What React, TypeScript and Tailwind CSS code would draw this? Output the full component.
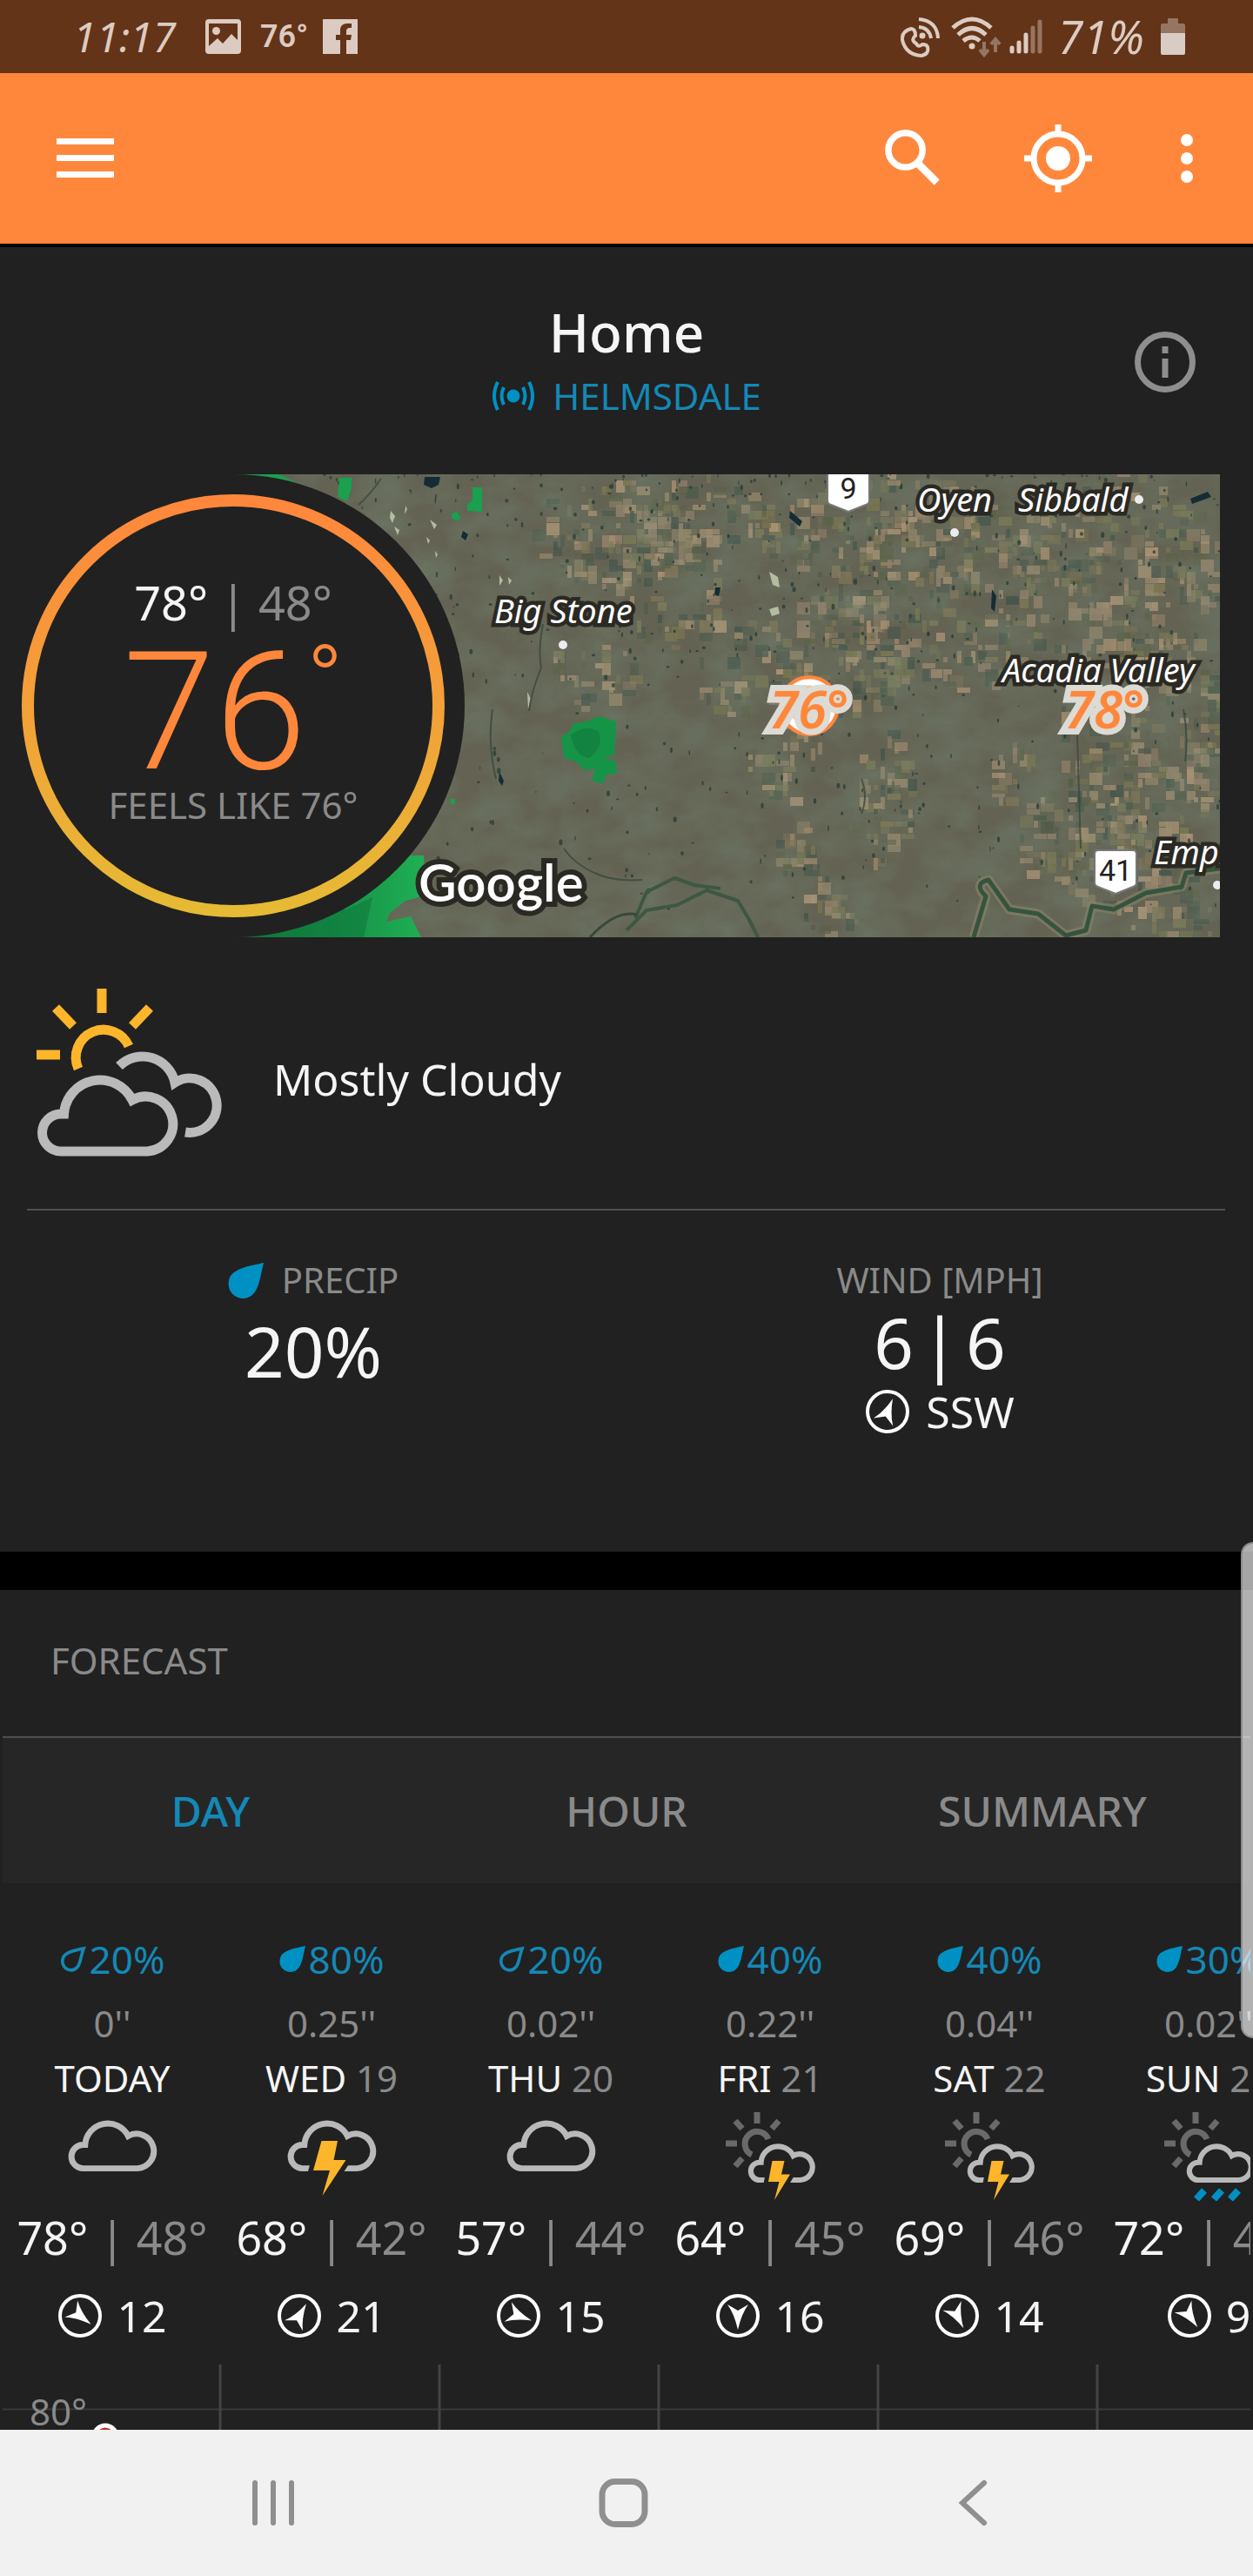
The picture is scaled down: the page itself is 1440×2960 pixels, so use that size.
import React, { useState } from 'react';

const days = [
  { day: 'TODAY', date: '', chance: 20, amount: "0''", icon: 'cloud', high: 78, low: 48, wind: 12, heading: 128 },
  { day: 'WED', date: '19', chance: 80, amount: "0.25''", icon: 'storm', high: 68, low: 42, wind: 21, heading: 30 },
  { day: 'THU', date: '20', chance: 20, amount: "0.02''", icon: 'cloud', high: 57, low: 44, wind: 15, heading: 110 },
  { day: 'FRI', date: '21', chance: 40, amount: "0.22''", icon: 'sun-storm', high: 64, low: 45, wind: 16, heading: 180 },
  { day: 'SAT', date: '22', chance: 40, amount: "0.04''", icon: 'sun-storm', high: 69, low: 46, wind: 14, heading: 153 },
  { day: 'SUN', date: '23', chance: 30, amount: "0.02''", icon: 'sun-rain', high: 72, low: 48, wind: 9, heading: 145 },
];

const tabs = ['DAY', 'HOUR', 'SUMMARY'];

const CLOUD = 'M30 193 A21.5 21.5 0 0 1 30 150 H33.5 A41.5 41.5 0 0 1 112 134 A31.5 31.5 0 1 1 129 193 Z';

function Drop({ filled = true, className }: { filled?: boolean; className: string }) {
  return (
    <svg viewBox="0 0 41 41" className={className} aria-hidden="true">
      {filled ? (
        <path d="M41 0 C28 3 7 6 2 17 C-3 30 6 41 18 41 C30 40 34 30 37 18 Q39 8 41 0Z" fill="#0091c4" />
      ) : (
        <path
          d="M37 4 C26 6 9 9 5 18 C1 29 8 38 18 38 C28 37 31 28 33 18 Q35 10 37 4Z"
          fill="none"
          stroke="#1487b4"
          strokeWidth="5"
        />
      )}
    </svg>
  );
}

function WindDirection({ heading }: { heading: number }) {
  return (
    <svg viewBox="-26 -26 52 52" className="size-[52px] shrink-0" aria-hidden="true">
      <circle r="23" fill="none" stroke="#fff" strokeWidth="4" />
      <path d="M0 -16 Q4 2 12 13 L0 6 L-12 13 Q-4 2 0 -16Z" fill="#fff" transform={`rotate(${heading})`} />
    </svg>
  );
}

function SmallSun() {
  return (
    <g fill="none" stroke="#6a6a6a" strokeWidth="7">
      <path d="M50 31 A14 14 0 1 0 31 49" />
      <path d="M37 0 V13 M1 36 H14 M12 10 L20 19 M62 10 L54 19 M12 62 L20 53" />
    </g>
  );
}

function DayIcon({ name }: { name: string }) {
  const small = name.startsWith('sun');
  const storm = name.endsWith('storm');
  return (
    <svg viewBox="0 0 104 102" className="h-[102px] w-[104px]" role="img" aria-label={name}>
      {small && <SmallSun />}
      <path
        d={CLOUD}
        fill="none"
        stroke="#b9b9b9"
        strokeWidth={small ? 13 : 11}
        transform={small ? 'translate(25.8 -13.1) scale(.472)' : 'translate(-.3 -57) scale(.63)'}
      />
      {storm && !small && (
        <path
          d="M40.5 33 H59 L54.5 55 H68.5 L41.5 96 L50 67 H31Z"
          fill="#fdb62b"
          stroke="#212121"
          strokeWidth="11"
          paintOrder="stroke"
        />
      )}
      {storm && small && (
        <path
          d="M54.5 56 H68.5 L65 71.5 H75 L57 101 L62.5 80 H50Z"
          fill="#fdb62b"
          stroke="#212121"
          strokeWidth="10"
          paintOrder="stroke"
        />
      )}
      {name === 'sun-rain' && (
        <path d="M38 100 L47 90 M58 100 L67 90 M77 100 L86 90" stroke="#0091c4" strokeWidth="8" />
      )}
    </svg>
  );
}

function MostlyCloudyIcon() {
  return (
    <svg viewBox="0 0 216 220" className="h-[220px] w-[216px] shrink-0" fill="none" strokeWidth="11" aria-hidden="true">
      <g stroke="#fdb62b">
        <path d="M50 98 A31.5 31.5 0 1 1 108 72" />
        <path d="M77 6 V34 M2 82 H29 M24 28 L44 49 M132 28 L112 49" />
      </g>
      <g stroke="#bababa">
        <path d="M97 95 A38 38 0 0 1 161 114 A31.2 31.2 0 1 1 173 171" />
        <path d={CLOUD} />
      </g>
    </svg>
  );
}

// Small seeded generator, so that the farmland looks the same on every render.
function makeRandom(seed: number) {
  let s = seed;
  return () => {
    s = (s * 1664525 + 1013904223) % 4294967296;
    return s / 4294967296;
  };
}

// [centre x, centre y, radius x, radius y, number of fields]
const farmland = [
  [430, 65, 90, 65, 110],
  [410, 225, 50, 40, 30],
  [500, 120, 60, 80, 70],
  [580, 210, 60, 70, 40],
  [700, 200, 80, 70, 100],
  [750, 60, 150, 60, 170],
  [800, 150, 130, 110, 150],
  [1010, 110, 125, 115, 240],
  [745, 370, 35, 75, 60],
  [635, 325, 45, 45, 36],
  [645, 424, 26, 30, 24],
  [677, 495, 28, 32, 24],
  [1040, 300, 95, 130, 220],
  [940, 420, 45, 60, 46],
  [1030, 440, 100, 60, 80],
  [890, 340, 26, 36, 20],
  [1080, 510, 55, 25, 28],
  [540, 50, 80, 50, 60],
];

const fieldColors = ['#94806a', '#a38c6e', '#7c7256', '#77734f', '#93856a', '#4f5a49', '#46544a', '#7a7856', '#ab9375', '#5c6048'];

function Terrain() {
  const rnd = makeRandom(19);
  const fields = farmland.flatMap(([cx, cy, rx, ry, count]) =>
    Array.from({ length: count }, () => {
      const a = rnd() * Math.PI * 2;
      const r = Math.sqrt(rnd());
      return {
        x: Math.round((cx + Math.cos(a) * r * rx) / 8) * 8,
        y: Math.round((cy + Math.sin(a) * r * ry) / 7) * 7,
        w: 5 + Math.floor(rnd() * 3) * 5,
        h: 6 + Math.floor(rnd() * 3) * 4,
        fill: fieldColors[Math.floor(rnd() * fieldColors.length)],
        opacity: 0.5 + rnd() * 0.45,
      };
    }),
  );
  const ponds = Array.from({ length: 620 }, () => ({
    x: rnd() * 1134,
    y: Math.pow(rnd(), 1.5) * 500,
    rx: 0.6 + rnd() * 1.5,
    ry: 0.8 + rnd() * 2.6,
  }));

  return (
    <svg viewBox="0 0 1134 532" preserveAspectRatio="xMinYMin slice" className="absolute inset-0 h-full w-full" aria-hidden="true">
      <defs>
        <filter id="soil" x="0" y="0" width="100%" height="100%">
          <feTurbulence type="fractalNoise" baseFrequency=".02 .03" numOctaves="6" seed="4" />
          <feColorMatrix values="0 0 0 0 .18  0 0 0 0 .27  0 0 0 0 .2  1.6 0 0 0 -.5" />
        </filter>
        <linearGradient id="woods" x1="0" x2="1">
          <stop offset="0" stopColor="#0d6a38" />
          <stop offset="1" stopColor="#1fb054" />
        </linearGradient>
      </defs>
      <rect width="1134" height="532" fill="#646353" />
      {fields.map((f, i) => (
        <rect key={i} x={f.x} y={f.y} width={f.w} height={f.h} fill={f.fill} opacity={f.opacity} />
      ))}
      <rect width="1134" height="532" filter="url(#soil)" opacity=".4" />
      {ponds.map((p, i) => (
        <ellipse key={i} cx={p.x} cy={p.y} rx={p.rx} ry={p.ry} fill="#253a36" opacity=".75" />
      ))}

      {/* Lakes and salt flats */}
      <path d="M220 3 H238 L236 12 L228 16 L219 12Z M264 65 l6 4 -3 7 -5 -4Z M306 342 l5 10 -2 6 -4 -6Z M554 130 h6 l-2 10 -5 -2Z M640 42 l14 12 -3 6 -12 -10Z M872 132 l5 8 -2 18 -4 -4Z M1100 28 l20 -8 4 6 -22 8Z" fill="#152c36" />
      <path d="M181 42 l5 6 -3 8 -3 -6Z M198 36 l2 4 -3 6Z M185 60 l6 4 -2 6Z M226 52 l8 6 -3 5Z M222 72 l4 4 -2 4Z M232 88 l3 4 -2 4Z M306 116 l4 6 -4 6Z M316 118 l4 4 -3 5Z M338 250 l4 8 -3 12Z M616 112 l10 6 2 12 -8 -3Z M616 155 l10 -3 2 8 -9 3Z" fill="#b4bda3" />
      <path d="M170 5 q-14 20 -26 30 M356 172 q-6 30 -2 50 q-12 30 -14 50 M298 270 q-6 40 4 80 M970 300 l4 130 M1092 270 q6 30 2 60 M722 350 q8 20 0 40 M380 430 q14 20 40 30 q20 8 50 6" fill="none" stroke="#39483d" strokeWidth="2" opacity=".8" />

      {/* Rivers */}
      <g fill="none" strokeLinejoin="round">
        <path d="M851 532 L865 485 Q850 470 868 466 L892 500 L925 505 L957 530 L980 524 L987 496 L1012 500 L1049 481 L1090 474 L1095 458 L1134 453" stroke="#8a8468" strokeWidth="11" opacity=".6" />
        <path d="M851 532 L865 485 Q850 470 868 466 L892 500 L925 505 L957 530 L980 524 L987 496 L1012 500 L1049 481 L1090 474 L1095 458 L1134 453" stroke="#35543f" strokeWidth="5" />
        <path d="M452 524 L475 501 L510 495 L544 478 L580 490 L592 510 L603 532 M462 510 L475 480 L507 464 L530 472 L560 476" stroke="#3d5743" strokeWidth="4" />
        <path d="M410 532 Q440 500 464 506" stroke="#39483d" strokeWidth="3" />
      </g>

      {/* Parks */}
      <path d="M0 0 H52 L72 9 H40Z M122 4 H136 V16 L131 31 L120 26Z M275 15 H286 V43 L269 42 V34 L275 30Z M251 45 L257 43 L262 50 L257 54 L251 50Z M250 373 h5 v6 h-5Z" fill="#1aa04e" />
      <path d="M377 302 L388 294 L390 287 L406 284 L421 278 L440 284 L438 322 L426 326 L440 330 L441 343 L428 346 L425 356 L412 352 L416 338 L404 340 L394 330 L380 326Z" fill="#159448" />
      <path d="M388 300 Q405 286 420 296 Q426 312 410 326 Q394 326 388 300Z" fill="#0f6f37" opacity=".45" />
      <path d="M0 532 L140 480 L204 438 L219 438 L220 460 L214 486 L198 490 L180 504 L176 514 L204 508 L216 532Z" fill="url(#woods)" />
      <path d="M60 532 Q90 498 130 500 L160 486 L150 532Z" fill="#0f7a3d" opacity=".6" />
    </svg>
  );
}

function Place({ className, children }: { className: string; children: React.ReactNode }) {
  return (
    <span
      className={`absolute text-[38px] leading-[44px] whitespace-nowrap text-white italic [paint-order:stroke_fill] [-webkit-text-stroke:9px_#2b2923] ${className}`}
    >
      {children}
    </span>
  );
}

function Station({ className, children }: { className: string; children: React.ReactNode }) {
  return (
    <span
      className={`absolute text-[60px] leading-[68px] font-semibold whitespace-nowrap text-[#ff873c] italic [paint-order:stroke_fill] [-webkit-text-stroke:14px_#dcdbd5] ${className}`}
    >
      {children}
    </span>
  );
}

function Shield({ className, children }: { className: string; children: React.ReactNode }) {
  return (
    <div className={`absolute h-[52px] w-[50px] ${className}`}>
      <svg viewBox="0 0 50 52" className="absolute inset-0" aria-hidden="true">
        <path d="M5 1 H45 Q49 1 49 5 V38 Q49 42 45 43 L25 51 L5 43 Q1 42 1 38 V5 Q1 1 5 1Z" fill="#fff" stroke="#77777a" strokeWidth="2" />
      </svg>
      <span className="relative block text-center font-[Roboto] text-[34px] leading-[48px] text-[#222]">{children}</span>
    </div>
  );
}

function TownDot({ className }: { className: string }) {
  return <span className={`absolute size-[10px] rounded-full bg-[#ececf0] ${className}`} />;
}

function RadarMap() {
  return (
    <div className="absolute inset-y-0 right-[38px] left-[268px] overflow-hidden bg-[#646153]">
      <Terrain />
      <Shield className="-top-[8px] left-[682px]">9</Shield>
      <Place className="top-[6px] left-[786px]">Oyen</Place>
      <TownDot className="top-[62px] left-[824px]" />
      <Place className="top-[6px] left-[902px]">Sibbald</Place>
      <TownDot className="top-[24px] left-[1036px]" />
      <Place className="top-[134px] left-[300px]">Big Stone</Place>
      <TownDot className="top-[191px] left-[374px]" />
      <Place className="top-[202px] left-[884px]">Acadia Valley</Place>
      <svg viewBox="0 0 70 70" className="absolute top-[231px] left-[627px] size-[70px]" aria-hidden="true">
        <circle cx="35" cy="35" r="33" fill="#f3c3a0" stroke="#ff873c" strokeWidth="4" />
        <circle cx="35" cy="35" r="27" fill="none" stroke="#fff" strokeWidth="7" />
      </svg>
      <Station className="top-[235px] left-[616px]">76°</Station>
      <Station className="top-[235px] left-[956px]">78°</Station>
      <Shield className="top-[431px] left-[989px]">41</Shield>
      <Place className="top-[411px] left-[1058px]">Empress</Place>
      <TownDot className="top-[467px] left-[1126px]" />
    </div>
  );
}

function StatusBar() {
  return (
    <div className="flex h-[84px] items-center justify-between bg-[#633418] pr-[78px] pl-[84px] text-[#dccbc1]">
      <div className="flex items-center">
        <span className="w-[152px] text-[48px] leading-[56px] italic">11:17</span>
        <svg viewBox="0 0 41 40" className="h-[40px] w-[41px]" aria-hidden="true">
          <path fillRule="evenodd" fill="currentColor" d="M4 0 H37 Q41 0 41 4 V36 Q41 40 37 40 H4 Q0 40 0 36 V4 Q0 0 4 0Z M4 5 V31 L14 22 L20 28 L30 17 L37 24 V5Z" />
          <circle cx="12.500" cy="13.500" r="4.500" fill="currentColor" />
        </svg>
        <span className="ml-[22px] font-[Roboto] text-[36px] leading-[40px] font-semibold">76°</span>
        <svg viewBox="0 0 40 40" className="ml-[17px] size-[40px]" aria-hidden="true">
          <path fill="currentColor" d="M0 0 H40 V40 H27 V24 H32 L33 18 H27 V14 Q27 10 31 10 H33 V5 H28 Q20 5 20 13 V18 H15 V24 H20 V40 H0Z" />
        </svg>
      </div>
      <div className="flex items-center">
        <svg viewBox="0 0 116 48" className="h-[48px] w-[116px]" fill="none" stroke="currentColor" strokeWidth="4" aria-hidden="true">
          <path d="M12 15 Q1 18 2 28 Q6 45 24 46 Q33 44 31 36 Q30 33 25 33 Q20 37 18 32 Q11 28 17 23 Q17 15 12 15Z" />
          <path d="M21 13 Q33 14 35 26 M21 4 Q42 6 43 26" />
          <circle cx="25" cy="23" r="3.500" fill="currentColor" stroke="none" />
          <g strokeWidth="5">
            <path d="M60 14 Q82 -6 104 14 M66 22 Q82 7 98 22 M72 29 Q82 21 91 29" />
          </g>
          <circle cx="82" cy="35" r="3.500" fill="currentColor" stroke="none" />
          <path d="M96 30 V44 M91 39 L96 45 L101 39 M109 42 V28 M104 33 L109 27 L114 33" stroke="#977563" />
        </svg>
        <svg viewBox="0 0 38 42" className="ml-[9px] h-[42px] w-[38px]" strokeWidth="5" strokeLinecap="round" aria-hidden="true">
          <path d="M3 34 V38 M11 28 V38 M19 19 V38" stroke="currentColor" />
          <path d="M27 11 V38 M35 4 V38" stroke="#977563" />
        </svg>
        <span className="ml-[18px] w-[118px] text-[52px] leading-[56px] italic">71%</span>
        <svg viewBox="0 0 28 42" className="h-[42px] w-[28px]" aria-hidden="true">
          <path d="M8 0 H20 V6 H26 Q28 6 28 8 V17 H0 V8 Q0 6 2 6 H8Z" fill="#977563" />
          <path d="M0 17 H28 V40 Q28 42 26 42 H2 Q0 42 0 40Z" fill="#d8ccc5" />
        </svg>
      </div>
    </div>
  );
}

function AppBar() {
  return (
    <header className="flex h-[200px] items-center justify-between border-b-4 border-black bg-[#ff873c] pr-[66px] pl-[65px]">
      <button type="button" aria-label="Menu">
        <svg viewBox="0 0 66 46" className="h-[46px] w-[66px]" fill="#fff">
          <path d="M0 0 H66 V7 H0Z M0 19 H66 V26 H0Z M0 38 H66 V45 H0Z" />
        </svg>
      </button>
      <div className="flex items-center">
        <button type="button" aria-label="Search">
          <svg viewBox="0 0 64 64" className="size-[68px]" fill="none" stroke="#fff">
            <circle cx="25" cy="23" r="18.500" strokeWidth="7" />
            <path d="M39 38 L59 58" strokeWidth="8" />
          </svg>
        </button>
        <button type="button" aria-label="My location" className="ml-[94px]">
          <svg viewBox="-40 -40 80 80" className="size-[80px]" fill="none" stroke="#fff" strokeWidth="7">
            <circle r="28" />
            <circle r="14" fill="#fff" stroke="none" />
            <path d="M0 -39 V-29 M0 39 V29 M-39 0 H-29 M39 0 H29" />
          </svg>
        </button>
        <button type="button" aria-label="More options" className="ml-[98px]">
          <svg viewBox="0 0 20 60" className="h-[60px] w-[20px]" fill="#fff">
            <circle cx="10" cy="9" r="7" />
            <circle cx="10" cy="30" r="7" />
            <circle cx="10" cy="51" r="7" />
          </svg>
        </button>
      </div>
    </header>
  );
}

function LocationHeader() {
  return (
    <div className="grid grid-cols-[1fr_auto_1fr] items-start pt-[61px] pb-[66px]">
      <div className="col-start-2 text-center">
        <h1 className="text-[62px] leading-[72px] font-medium text-[#f5f5f5]">Home</h1>
        <a href="#station" className="mt-[14px] flex items-center gap-[20px] text-[42px] leading-[48px] text-[#1488b6]">
          <svg viewBox="0 0 50 34" className="h-[34px] w-[50px]" fill="none" stroke="#0091c4" strokeWidth="4" aria-hidden="true">
            <circle cx="25" cy="17" r="7.500" fill="#0091c4" stroke="none" />
            <path d="M14 7 Q9 17 14 27 M36 7 Q41 17 36 27 M7 1 Q-1 17 7 33 M43 1 Q51 17 43 33" />
          </svg>
          HELMSDALE
        </a>
      </div>
      <button type="button" aria-label="Station information" className="mt-[35px] mr-[65px] justify-self-end">
        <svg viewBox="0 0 72 72" className="size-[72px]" fill="none" stroke="#8e8e8e">
          <circle cx="36" cy="36" r="31.500" strokeWidth="7" />
          <path d="M36 18 V26 M36 32 V54" strokeWidth="7" />
        </svg>
      </button>
    </div>
  );
}

function CurrentTemperature() {
  return (
    <div className="relative ml-[2px] size-[532px] rounded-full bg-[#212121]">
      <svg viewBox="0 0 532 532" className="absolute inset-0" fill="none" aria-hidden="true">
        <defs>
          <linearGradient id="ring" x1="0" y1="0" x2="0" y2="1">
            <stop offset="0" stopColor="#ff873c" />
            <stop offset="1" stopColor="#e6ba35" />
          </linearGradient>
        </defs>
        <circle cx="266" cy="266" r="236" stroke="url(#ring)" strokeWidth="14" />
      </svg>
      <div className="relative flex flex-col items-center pt-[117px]">
        <p className="text-[54px] leading-[60px] text-[#8a8a8a]">
          <span className="text-[#f5f5f5]">78°</span> | 48°
        </p>
        <p className="mt-[16px] flex items-start font-[Roboto] font-light text-[#ff873c]">
          <span className="text-[190px] leading-[160px]">76</span>
          <span className="text-[112px] leading-[88px]">°</span>
        </p>
        <p className="mt-[3px] text-[42px] leading-[48px] text-[#8a8a8a]">FEELS LIKE 76°</p>
      </div>
    </div>
  );
}

function CurrentConditions() {
  return (
    <section aria-label="Current conditions">
      <div className="relative">
        <RadarMap />
        <CurrentTemperature />
        <span className="absolute top-[432px] left-[481px] font-[Lato] text-[60px] leading-[72px] font-semibold text-white [paint-order:stroke_fill] [-webkit-text-stroke:12px_#2b2923]">
          Google
        </span>
      </div>

      <div className="flex items-center gap-[58px] pt-[53px] pb-[39px] pl-[40px]">
        <MostlyCloudyIcon />
        <p className="text-[50px] leading-[60px] text-[#f5f5f5]">Mostly Cloudy</p>
      </div>
      <hr className="mr-[32px] ml-[31px] border-t-2 border-[#4f4f4f]" />

      <div className="grid grid-cols-2 pt-[56px] pb-[133px] text-[#f5f5f5]">
        <div className="flex flex-col items-center">
          <h2 className="flex items-center gap-[21px] text-[40px] leading-[48px] text-[#8a8a8a]">
            <Drop className="size-[41px]" />
            PRECIP
          </h2>
          <p className="mt-[17px] text-[80px] leading-[80px]">20%</p>
        </div>
        <div className="flex flex-col items-center">
          <h2 className="text-[40px] leading-[48px] text-[#8a8a8a]">WIND [MPH]</h2>
          <p className="mt-[7px] flex gap-2 text-[80px] leading-[80px]">
            <span>6</span>
            <span>|</span>
            <span>6</span>
          </p>
          <p className="mt-[12px] flex items-center gap-[18px] text-[50px] leading-[56px]">
            <WindDirection heading={22} />
            SSW
          </p>
        </div>
      </div>
    </section>
  );
}

function DayColumn({ item }: { item: (typeof days)[number] }) {
  return (
    <li className="flex w-[252px] shrink-0 flex-col items-center text-[42px] leading-[48px] whitespace-nowrap text-[#8a8a8a]">
      <p className="flex items-center gap-[4px] text-[44px] text-[#1488b6]">
        <Drop filled={item.chance >= 30} className="size-[30px]" />
        {item.chance}%
      </p>
      <p className="mt-[26px]">{item.amount}</p>
      <p className="mt-[15px]">
        <span className="text-[#f5f5f5]">{item.day}</span> {item.date}
      </p>
      <div className="mt-[15px]">
        <DayIcon name={item.icon} />
      </div>
      <p className="mt-[12px] text-[52px] leading-[60px]">
        <span className="text-[#f5f5f5]">{item.high}°</span> | {item.low}°
      </p>
      <p className="mt-[34px] flex items-center gap-[16px] text-[50px] leading-[52px] text-[#f5f5f5]">
        <WindDirection heading={item.heading} />
        {item.wind}
      </p>
    </li>
  );
}

function Forecast() {
  const [active, setActive] = useState('DAY');
  return (
    <section aria-label="Forecast" className="flex flex-1 flex-col">
      <h2 className="pt-[57px] pb-[63px] pl-[58px] text-[42px] leading-[48px] text-[#8a8a8a]">FORECAST</h2>
      <div className="mx-[3px] grid grid-cols-3 border-t-2 border-[#4f4f4f] bg-[#262626]" role="tablist">
        {tabs.map((tab) => (
          <button
            key={tab}
            type="button"
            role="tab"
            aria-selected={tab === active}
            onClick={() => setActive(tab)}
            className={`h-[167px] text-[48px] leading-[56px] font-medium ${tab === active ? 'text-[#1488b6]' : 'text-[#8a8a8a]'}`}
          >
            {tab}
          </button>
        ))}
      </div>

      <ul className="mx-[3px] flex overflow-hidden pt-[63px] pb-[30px]">
        {days.map((item) => (
          <DayColumn key={item.day} item={item} />
        ))}
      </ul>

      {/* Top of the temperature chart, cut off by the navigation bar */}
      <div className="mx-[3px] min-h-[75px] flex-1 overflow-hidden">
        <svg className="h-[75px] w-full" aria-label="Temperature chart">
          <path d="M0 51.500 H2000" stroke="#3a3a3a" strokeWidth="2" />
          {days.map((item, i) => (
            <path key={item.day} d={`M${(i + 1) * 252 - 2} 0 V75`} stroke="#444" strokeWidth="3" />
          ))}
          <text x="31" y="70" className="fill-[#8a8a8a] text-[42px]">80°</text>
          <circle cx="118" cy="83" r="13" fill="#c0302b" stroke="#fff" strokeWidth="5" />
        </svg>
      </div>
    </section>
  );
}

function NavigationBar() {
  return (
    <nav className="grid h-[168px] grid-cols-3 place-items-center bg-[#f1f1f1] pr-[121px] pl-[113px]">
      <button type="button" aria-label="Recent apps">
        <svg viewBox="0 0 60 60" className="size-[60px]" stroke="#8f8f8f" strokeWidth="6" strokeLinecap="round">
          <path d="M9 7 V53 M30 7 V53 M51 7 V53" />
        </svg>
      </button>
      <button type="button" aria-label="Home">
        <svg viewBox="0 0 60 60" className="size-[60px]" fill="none" stroke="#8f8f8f" strokeWidth="7">
          <rect x="6" y="5.500" width="49" height="49" rx="15" />
        </svg>
      </button>
      <button type="button" aria-label="Back">
        <svg viewBox="0 0 60 60" className="size-[60px]" fill="none" stroke="#8f8f8f" strokeWidth="6" strokeLinecap="round">
          <path d="M43 7 L18 30 L43 53" />
        </svg>
      </button>
    </nav>
  );
}

export default function App() {
  return (
    <div className="relative flex min-h-screen flex-col overflow-hidden bg-[#212121] font-['Noto_Sans',sans-serif]">
      <StatusBar />
      <AppBar />
      <main className="flex flex-1 flex-col">
        <LocationHeader />
        <CurrentConditions />
        <div className="h-[44px] bg-black" />
        <Forecast />
      </main>
      <NavigationBar />
      {/* Scroll handle */}
      <div className="absolute top-[1772px] right-0 h-[570px] w-[14px] rounded-l-[14px] border-y-2 border-l-2 border-[#8c8c8c] bg-white/65" />
    </div>
  );
}
